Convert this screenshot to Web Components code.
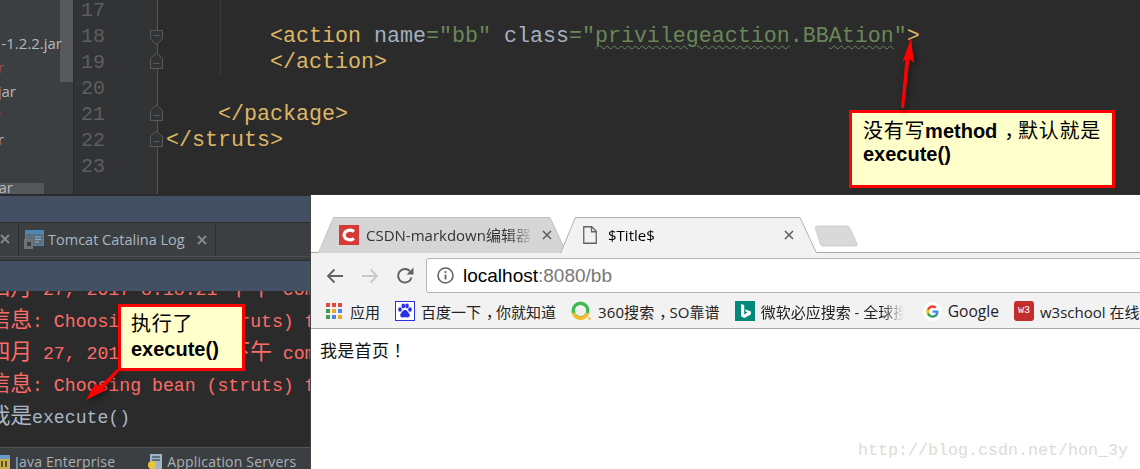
<!DOCTYPE html>
<html>
<head>
<meta charset="utf-8">
<title>struts default method</title>
<style>
  html, body { margin: 0; padding: 0; background: #2b2b2b; }
  body { width: 1140px; height: 469px; overflow: hidden; }
</style>
</head>
<body>
<desk-top>
  <code-editor></code-editor>
  <tool-window></tool-window>
  <browser-window></browser-window>

  <call-out style="left:849px;top:110px;width:266px;height:78px;padding:7px 0 0 11px;line-height:23px">
    <span class="zh">没有写</span><b>method</b><span class="zh" style="padding-left:7px;margin-right:-7px">，</span><span class="zh">默认就是</span><br><b>execute()</b>
  </call-out>
  <call-out style="left:118px;top:304px;width:127px;height:67px;padding:5px 0 0 10px">
    <span class="zh">执行了</span><br><b>execute()</b>
  </call-out>
  <red-arrow left="895" top="34" width="24" height="76" points="16,4 19,29 14.500,25 9,74 6,74 10.500,25 7,29"></red-arrow>
  <red-arrow left="82" top="366" width="40" height="38" points="4,34 13,18 18,20 35,3 37,5 21,23 26,23"></red-arrow>
</desk-top>

<script>
// whole picture: editor on top, tool window and browser side by side under it
const deskTpl = document.createElement("template");
deskTpl.innerHTML = `<style>
  :host { display: grid; grid-template-columns: 310px 830px; grid-template-rows: 194px 275px; width: 1140px; height: 469px; position: relative; overflow: hidden; }
  ::slotted(code-editor) { grid-column: 1 / 3; }
</style><slot></slot>`;
class DeskTop extends HTMLElement {
  constructor() {
    super();
    this.attachShadow({ mode: "open" }).append(deskTpl.content.cloneNode(true));
  }
}
customElements.define("desk-top", DeskTop);

const editorTpl = document.createElement("template");
editorTpl.innerHTML = `<style>
  :host { display: flex; height: 194px; overflow: hidden; background: #2b2b2b; font-family: "Liberation Mono", monospace; }
  .tree { width: 73px; flex: none; background: #3c3f41; border-right: 1px solid #2b2b2b; position: relative; padding-top: 31px; box-sizing: content-box; font: 15px "Open Sans", sans-serif; color: #b6b9bb; }
  .scroll { position: absolute; left: 60px; top: 0; width: 13px; height: 82px; background: #57595b; }
  .row { position: relative; height: 24px; line-height: 24px; display: flex; justify-content: flex-end; white-space: nowrap; overflow: hidden; }
  .red { color: #a5544f; }
  .sel { margin-top: 32px; height: 12px; line-height: 8px; background: #55585a; }
  .gutter { width: 83px; flex: none; background: #313335; border-right: 1px solid #555; }
  .gutter > div { height: 26px; display: flex; font-size: 20px; line-height: 26px; color: #5c5f61; padding-left: 7px; margin-right: -6px; }
  .gutter > div:first-child { margin-top: -3px; }
  .gutter span { position: relative; top: 1px; }
  .gutter svg { margin-left: auto; flex: none; }
  .code { flex: 1; font-size: 21.67px; line-height: 26px; padding-left: 8px; color: #deb666; background: linear-gradient(#3b3b3b, #3b3b3b) no-repeat 62px 0 / 1px 75px; }
  .code > div { height: 26px; white-space: pre; }
  .code > div:first-child { margin-top: -2px; }
  .a { color: #a3b1bf; }
  .s { color: #6a8759; }
  .w { text-decoration: underline wavy #6a8759 1px; text-underline-offset: 3px; }
</style>
<div class="tree">
  <div class="scroll"></div>
  <div class="row" style="width:62px">-1.2.2.jar</div>
  <div class="row red" style="width:4px">r</div>
  <div class="row" style="width:16px">jar</div>
  <div class="row red" style="width:1px">r</div>
  <div class="row" style="width:4px">r</div>
  <div class="row sel" style="width:44px"><span style="margin-right:31px">ar</span></div>
</div>
<div class="gutter"></div>
<div class="code">
  <div></div>
  <div>        &lt;action <span class="a">name</span><span class="s">="bb"</span> <span class="a">class</span><span class="s">="<span class="w">privilegeaction</span>.BB<span class="w">Ation</span>"</span>&gt;</div>
  <div>        &lt;/action&gt;</div>
  <div></div>
  <div>    &lt;/package&gt;</div>
  <div>&lt;/struts&gt;</div>
  <div></div>
</div>`;

class CodeEditor extends HTMLElement {
  constructor() {
    super();
    const root = this.attachShadow({ mode: "open" });
    root.append(editorTpl.content.cloneNode(true));
    // 0 = no fold mark, 1 = opening mark, 2 = closing mark
    const folds = { 18: 1, 19: 2, 21: 2, 22: 2 };
    const gutter = root.querySelector(".gutter");
    for (let n = 17; n <= 23; n++) {
      const row = document.createElement("div");
      row.innerHTML = `<span>${n}</span>` + this.foldMark(folds[n] || 0);
      gutter.append(row);
    }
  }

  foldMark(kind) {
    if (kind === 1) {
      return `<svg width="13" height="26" viewBox="0 0 13 26"><path d="M.5 7.500h12v8l-6 6.500-6-6.500z" fill="#313335" stroke="#5a5a5a"/><path d="M3.500 12.500h6" stroke="#5a5a5a"/></svg>`;
    }
    if (kind === 2) {
      return `<svg width="13" height="26" viewBox="0 0 13 26"><path d="M6.500 4l6 5.500v10h-12v-10z" fill="#313335" stroke="#5a5a5a"/><path d="M3.500 14.500h6" stroke="#5a5a5a"/></svg>`;
    }
    return `<svg width="13" height="26"></svg>`;
  }
}
customElements.define("code-editor", CodeEditor);

const toolTpl = document.createElement("template");
toolTpl.innerHTML = `<style>
  :host { display: flex; flex-direction: column; height: 275px; overflow: hidden; background: #2b2b2b; padding-top: 2px; box-sizing: border-box; }
  .head { height: 26px; flex: none; background: #434f63; border-bottom: 1px solid #2f2f2f; }
  .tabs { height: 33px; flex: none; background: #3c3f41; display: flex; align-items: center; font: 14.5px "Open Sans", sans-serif; color: #a9b7c6; border-bottom: 1px solid #4a4c4e; box-sizing: content-box; }
  .x { width: 12px; height: 12px; flex: none; }
  .stub { width: 18px; height: 33px; border-right: 1px solid #2b2b2b; display: flex; align-items: center; box-sizing: content-box; }
  .tab { width: 196px; height: 33px; border-right: 1px solid #2b2b2b; display: flex; align-items: center; white-space: nowrap; }
  .tab .icon { margin: 0 4px 0 5px; flex: none; }
  .tab .x { margin-left: auto; margin-right: 7px; }
  .gap { height: 3px; flex: none; background: #3c3f41; border-bottom: 1px solid #2b2b2b; }
  .blue { height: 30px; flex: none; background: #434f63; }
  .log { flex: 1; overflow: hidden; font: 18.18px/32px "Liberation Mono", monospace; color: #ff6b68; margin-left: -11.600px; }
  .log > div { height: 32px; white-space: pre; }
  .log > div:first-child { margin-top: -17px; }
  .zh { font: 21.82px/0 "Noto Sans CJK SC", sans-serif; }
  .out { color: #a9b7c6; }
  .status { height: 21px; flex: none; background: #3c3f41; border-top: 1px solid #555; padding-top: 3px; box-sizing: content-box; display: flex; align-items: center; font: 14px "Open Sans", sans-serif; letter-spacing: .2px; color: #a9b1b8; white-space: nowrap; margin-bottom: -3px; }
  .status svg { flex: none; }
</style>
<div class="head"></div>
<div class="tabs">
  <div class="stub"><svg class="x" viewBox="0 0 12 12"><path d="M1 1l8 8M9 1l-8 8" stroke="#85888a" stroke-width="2"/></svg></div>
  <div class="tab">
    <svg class="icon" width="20" height="20" viewBox="0 0 20 20"><rect x="1" y="0" width="19" height="16" fill="#4d86b3"/><rect x="2" y="4" width="17" height="11" fill="#5d6f7d"/><path d="M11 7h6M11 9.500h6M11 12h4" stroke="#7fb0d6"/><rect x="0" y="9" width="9" height="10" fill="#6f7274"/><rect x="3" y="12" width="4" height="4" fill="#3c3f41"/></svg>
    Tomcat Catalina Log
    <svg class="x" viewBox="0 0 12 12"><path d="M2 2l8 8M10 2l-8 8" stroke="#85888a" stroke-width="2"/></svg>
  </div>
</div>
<div class="gap"></div>
<div class="blue"></div>
<div class="log">
  <div><span class="zh">四月</span> 27, 2017 8:18:21 <span class="zh">下午</span> com</div>
  <div><span class="zh">信息</span>: Choosing bean (struts) for</div>
  <div><span class="zh">四月</span> 27, 2017 8:18:21 <span class="zh">下午</span> com</div>
  <div><span class="zh">信息</span>: Choosing bean (struts) for</div>
  <div class="out"><span class="zh">我是</span>execute()</div>
</div>
<div class="status">
  <svg width="11" height="16" viewBox="0 0 11 16" style="margin:0 4px 0 0"><rect x="-4" y="1" width="14" height="4" fill="#6a9cc9"/><rect x="-4" y="5" width="14" height="10" fill="#c9b04a"/><path d="M2 7v6M6 7v6" stroke="#2f3a2f" stroke-width="1.500"/></svg>
  <span>Java Enterprise</span>
  <svg width="16" height="18" viewBox="0 0 16 18" style="margin:0 4px 0 32px"><rect x="3" y="1" width="12" height="15" fill="#9fb4c4"/><path d="M5 4h8M5 7h8" stroke="#4a5a66" stroke-width="1.500"/><circle cx="5" cy="12" r="4" fill="#e8c53a"/></svg>
  <span>Application Servers</span>
</div>`;
class ToolWindow extends HTMLElement {
  constructor() {
    super();
    this.attachShadow({ mode: "open" }).append(toolTpl.content.cloneNode(true));
  }
}
customElements.define("tool-window", ToolWindow);

// one chrome tab, slanted sides are drawn by the svg behind the content
const tabTpl = document.createElement("template");
tabTpl.innerHTML = `<style>
  :host { display: flex; align-items: center; position: relative; height: 36px; flex: none; box-sizing: border-box; padding-bottom: 1px; color: #333; }
  svg.shape { position: absolute; left: 0; top: 0; z-index: 0; }
  .body { position: relative; z-index: 1; display: flex; align-items: center; width: 100%; }
  .label { flex: 1; overflow: hidden; white-space: nowrap; font: 15px "Open Sans", "Noto Sans CJK SC", sans-serif; -webkit-mask-image: linear-gradient(to right, #000 85%, transparent); mask-image: linear-gradient(to right, #000 85%, transparent); }
  .close { width: 12px; height: 12px; flex: none; margin-left: 8px; }
</style>
<svg class="shape" height="36"><path/></svg>
<div class="body">
  <slot name="icon"></slot>
  <span class="label"></span>
  <svg class="close" viewBox="0 0 12 12"><path d="M2 2l8 8M10 2l-8 8" stroke="#5a5a5a" stroke-width="1.500"/></svg>
</div>`;
class BrowserTab extends HTMLElement {
  constructor() {
    super();
    const root = this.attachShadow({ mode: "open" });
    root.append(tabTpl.content.cloneNode(true));
    const w = parseInt(this.getAttribute("width"));
    const active = this.hasAttribute("active");
    this.style.width = w + "px";
    const shape = root.querySelector(".shape");
    shape.setAttribute("width", w);
    const path = root.querySelector(".shape path");
    path.setAttribute("d", `M.5 36L15.500.500H${w - 17}L${w - 0.5} 36`);
    path.setAttribute("fill", active ? "#f2f2f2" : "#d5d5d5");
    path.setAttribute("stroke", active ? "#b0b0b0" : "#c0c0c0");
    const body = root.querySelector(".body");
    body.style.padding = `0 ${this.getAttribute("pad-right")}px 0 ${this.getAttribute("pad-left")}px`;
    body.style.boxSizing = "border-box";
    const label = root.querySelector(".label");
    label.textContent = this.getAttribute("label");
    if (active) {
      label.style.color = "#000";
      this.style.zIndex = 1;
    }
  }
}
customElements.define("browser-tab", BrowserTab);

const bookmarkTpl = document.createElement("template");
bookmarkTpl.innerHTML = `<style>
  :host { display: flex; align-items: center; flex: none; font: 15px "Open Sans", "Noto Sans CJK SC", sans-serif; color: #222; white-space: nowrap; }
  ::slotted(svg) { flex: none; }
  .t { display: block; overflow: hidden; }
  :host([fade]) .t { -webkit-mask-image: linear-gradient(to right, #000 82%, transparent 97%); mask-image: linear-gradient(to right, #000 82%, transparent 97%); }
</style>
<slot name="icon"></slot><span class="t"><slot></slot></span>`;
class BookmarkItem extends HTMLElement {
  constructor() {
    super();
    const root = this.attachShadow({ mode: "open" });
    root.append(bookmarkTpl.content.cloneNode(true));
    const t = root.querySelector(".t");
    t.style.marginLeft = (this.getAttribute("gap") || 6) + "px";
    if (this.getAttribute("max")) t.style.width = this.getAttribute("max") + "px";
  }
}
customElements.define("bookmark-item", BookmarkItem);

const browserTpl = document.createElement("template");
browserTpl.innerHTML = `<style>
  :host { display: block; height: 275px; overflow: hidden; background: #fff; border-left: 1px solid #444; border-top: 1px solid #333; box-sizing: border-box; position: relative; }
  .top { height: 22px; }
  .strip { height: 36px; display: flex; align-items: flex-start; padding-left: 7px; border-bottom: 1px solid #aaa; box-sizing: border-box; }
  .plus { margin-left: -3px; margin-top: 8px; flex: none; }
  .tools { height: 40px; background: #f2f2f2; display: flex; align-items: flex-end; padding-left: 6px; border-bottom: 0; }
  .btn { width: 35px; height: 35px; display: flex; align-items: center; justify-content: center; flex: none; }
  .url { margin-left: 4px; flex: none; width: 760px; height: 35px; background: #fff; border: 1px solid #b5b5b5; border-radius: 3px; box-sizing: border-box; display: flex; align-items: center; font: 19px "Liberation Sans", sans-serif; color: #777; padding-left: 10px; }
  .url svg { margin-right: 9px; flex: none; }
  .url b { font-weight: 400; color: #000; }
  .marks { height: 36px; background: #f2f2f2; border-bottom: 1px solid #aaa; box-sizing: border-box; display: flex; align-items: center; gap: 15px; padding-left: 15px; overflow: hidden; border-top: 1px solid transparent; }
  .page { padding: 10px 0 0 9px; font: 17px/22px "Noto Sans CJK SC", sans-serif; letter-spacing: .3px; color: #111; }
  .tc { font-family: "Noto Sans CJK TC", sans-serif; }
  .pc { padding-left: 5px; margin-right: -5px; }
  .mark { position: absolute; left: 547px; top: 244px; font: 16.670px/24px "Liberation Mono", monospace; color: #dcdcd4; white-space: nowrap; }
</style>
<div class="top"></div>
<div class="strip">
  <browser-tab width="249" pad-left="21" pad-right="14" label="CSDN-markdown编辑器">
    <svg slot="icon" width="20" height="20" viewBox="0 0 20 20" style="margin-right:7px;display:block"><rect width="20" height="20" fill="#d63a37"/><path d="M15 6.500C12 4 5.500 5 5 10c.5 5 7 6 10 3.500" fill="none" stroke="#fff" stroke-width="3"/></svg>
  </browser-tab>
  <browser-tab active width="257" pad-left="23" pad-right="22" label="$Title$" style="margin-left:-7px">
    <svg slot="icon" width="14" height="18" viewBox="0 0 14 18" style="margin-right:11px;display:block"><path d="M.75.75h8l4.500 4.500v12h-12.500z M8.500.75v5h5" fill="none" stroke="#5f6368" stroke-width="1.300"/></svg>
  </browser-tab>
  <svg class="plus" width="44" height="23" viewBox="0 0 44 23"><path d="M4 1h29c1 0 2 .5 2.500 1.500l7.500 16c.5 1.500 0 2.500-2 2.500H9c-1 0-2-.5-2.500-1.500L1.500 3.500C1 2 2 1 4 1z" fill="#d9d9d9" stroke="#cfcfcf"/></svg>
</div>
<div class="tools">
  <div class="btn"><svg width="18" height="16" viewBox="0 0 18 16"><path d="M17 8H2M8.500 1.500L2 8l6.500 6.500" fill="none" stroke="#5f6368" stroke-width="1.800"/></svg></div>
  <div class="btn"><svg width="18" height="16" viewBox="0 0 18 16"><path d="M1 8h15M9.500 1.500L16 8l-6.500 6.500" fill="none" stroke="#c9c9c9" stroke-width="1.800"/></svg></div>
  <div class="btn"><svg width="18" height="18" viewBox="0 0 18 18"><path d="M15.500 10.500A6.800 6.800 0 1 1 13.800 4" fill="none" stroke="#5f6368" stroke-width="2"/><path d="M10.500 7.500h7v-7z" fill="#5f6368"/></svg></div>
  <div class="url">
    <svg width="17" height="17" viewBox="0 0 17 17"><circle cx="8.500" cy="8.500" r="7.500" fill="none" stroke="#5f6368" stroke-width="1.600"/><path d="M8.500 7.500v5" stroke="#5f6368" stroke-width="1.800"/><circle cx="8.500" cy="5" r="1.100" fill="#5f6368"/></svg>
    <span><b>localhost</b>:8080/bb</span>
  </div>
</div>
<div class="marks">
  <bookmark-item>
    <svg slot="icon" width="18" height="18" viewBox="0 0 18 18"><rect x="0" y="1" width="4" height="4" fill="#e8453c"/><rect x="6" y="1" width="4" height="4" fill="#e8453c"/><rect x="12" y="1" width="4" height="4" fill="#e8453c"/><rect x="0" y="7" width="4" height="4" fill="#3f9c4f"/><rect x="6" y="7" width="4" height="4" fill="#f4a522"/><rect x="12" y="7" width="4" height="4" fill="#4a86e8"/><rect x="0" y="13" width="4" height="4" fill="#3f9c4f"/><rect x="6" y="13" width="4" height="4" fill="#4a86e8"/><rect x="12" y="13" width="4" height="4" fill="#f4a522"/></svg>
    应用
  </bookmark-item>
  <bookmark-item>
    <svg slot="icon" width="20" height="20" viewBox="0 0 20 20"><rect x=".5" y=".5" width="19" height="19" fill="#fff" stroke="#2932e1"/><g fill="#2932e1"><ellipse cx="5" cy="8.500" rx="1.800" ry="2.300"/><ellipse cx="8.300" cy="5" rx="1.800" ry="2.400"/><ellipse cx="12" cy="5" rx="1.800" ry="2.400"/><ellipse cx="15" cy="8.500" rx="1.800" ry="2.300"/><path d="M10 9c2.500 0 3 2.500 4.500 4 1 2-.5 3.800-2.500 3.500-1-.2-3-.2-4 0-2 .3-3.500-1.500-2.500-3.500C7 11.500 7.500 9 10 9z"/></g></svg>
    百度一下<span class="pc">，</span>你就知道
  </bookmark-item>
  <bookmark-item gap="7" style="letter-spacing:.1px">
    <svg slot="icon" width="20" height="20" viewBox="0 0 20 20"><circle cx="9.500" cy="9.500" r="7.300" fill="none" stroke="#3cba54" stroke-width="3.400"/><path d="M2.500 12a7.300 7.300 0 0 0 14 0" fill="none" stroke="#fbbc28" stroke-width="3.400"/><circle cx="18.500" cy="17.500" r="1.300" fill="#f2b632"/></svg>
    360搜索<span class="pc">，</span>SO靠谱
  </bookmark-item>
  <bookmark-item fade max="147">
    <svg slot="icon" width="20" height="20" viewBox="0 0 20 20"><rect width="20" height="20" fill="#00897b"/><path d="M6 3l3.200 1.100v9.400l3.300-1.900-1.600-.8-1-2.500 6 2.100v3L9.200 17 6 15.200z" fill="#fff"/></svg>
    微软必应搜索 - 全球搜索
  </bookmark-item>
  <bookmark-item style="font-size:15.6px">
    <svg slot="icon" width="19" height="19" viewBox="0 0 19 19"><circle cx="9.500" cy="9.500" r="9.500" fill="#fff"/><path d="M15.500 9.700c0-.5 0-.9-.1-1.300H9.600v2.400H13a2.900 2.900 0 0 1-1.300 1.900v1.600h2.100c1.100-1.100 1.700-2.700 1.700-4.600z" fill="#4285f4"/><path d="M9.600 15.800c1.700 0 3.200-.6 4.200-1.500l-2.100-1.600c-.6.400-1.300.6-2.100.6-1.600 0-3-1.100-3.500-2.600H4v1.600a6.300 6.300 0 0 0 5.600 3.500z" fill="#34a853"/><path d="M6.100 10.700a3.800 3.800 0 0 1 0-2.400V6.700H4a6.300 6.300 0 0 0 0 5.600z" fill="#fbbc05"/><path d="M9.600 5.700c.9 0 1.800.3 2.400.9l1.800-1.800a6.300 6.300 0 0 0-9.800 1.900l2.100 1.600c.5-1.500 1.900-2.600 3.500-2.600z" fill="#ea4335"/></svg>
    Google
  </bookmark-item>
  <bookmark-item>
    <span slot="icon" style="display:flex;width:20px;height:20px;background:#c22d2d;border-radius:3px;color:#fff;font:10px/20px 'Liberation Mono',monospace;justify-content:center;flex:none">w3</span>
    w3school 在线教程
  </bookmark-item>
</div>
<div class="page">我是首页<span class="tc">！</span></div>
<div class="mark">http://blog.csdn.net/hon_3y</div>`;
class BrowserWindow extends HTMLElement {
  constructor() {
    super();
    this.attachShadow({ mode: "open" }).append(browserTpl.content.cloneNode(true));
  }
}
customElements.define("browser-window", BrowserWindow);

// yellow note with red border, sits over the screenshot
const noteTpl = document.createElement("template");
noteTpl.innerHTML = `<style>
  :host { display: block; position: absolute; box-sizing: border-box; background: #ffffcc; border: 3px solid #ff0000; font: bold 20px/25px "Liberation Sans", sans-serif; color: #000; z-index: 5; }
  ::slotted(.zh) { font: 400 20px/1 "Noto Sans CJK SC", sans-serif; letter-spacing: .7px; }
</style><slot></slot>`;
class CallOut extends HTMLElement {
  constructor() {
    super();
    this.attachShadow({ mode: "open" }).append(noteTpl.content.cloneNode(true));
  }
}
customElements.define("call-out", CallOut);

const arrowTpl = document.createElement("template");
arrowTpl.innerHTML = `<style>
  :host { display: block; position: absolute; z-index: 6; filter: drop-shadow(2px 3px 3px rgba(0,0,0,.45)); }
  svg { display: block; overflow: visible; }
</style><svg><polygon fill="#ff0000"/></svg>`;
class RedArrow extends HTMLElement {
  constructor() {
    super();
    const root = this.attachShadow({ mode: "open" });
    root.append(arrowTpl.content.cloneNode(true));
    this.style.left = this.getAttribute("left") + "px";
    this.style.top = this.getAttribute("top") + "px";
    const svg = root.querySelector("svg");
    svg.setAttribute("width", this.getAttribute("width"));
    svg.setAttribute("height", this.getAttribute("height"));
    root.querySelector("polygon").setAttribute("points", this.getAttribute("points"));
  }
}
customElements.define("red-arrow", RedArrow);
</script>
</body>
</html>
